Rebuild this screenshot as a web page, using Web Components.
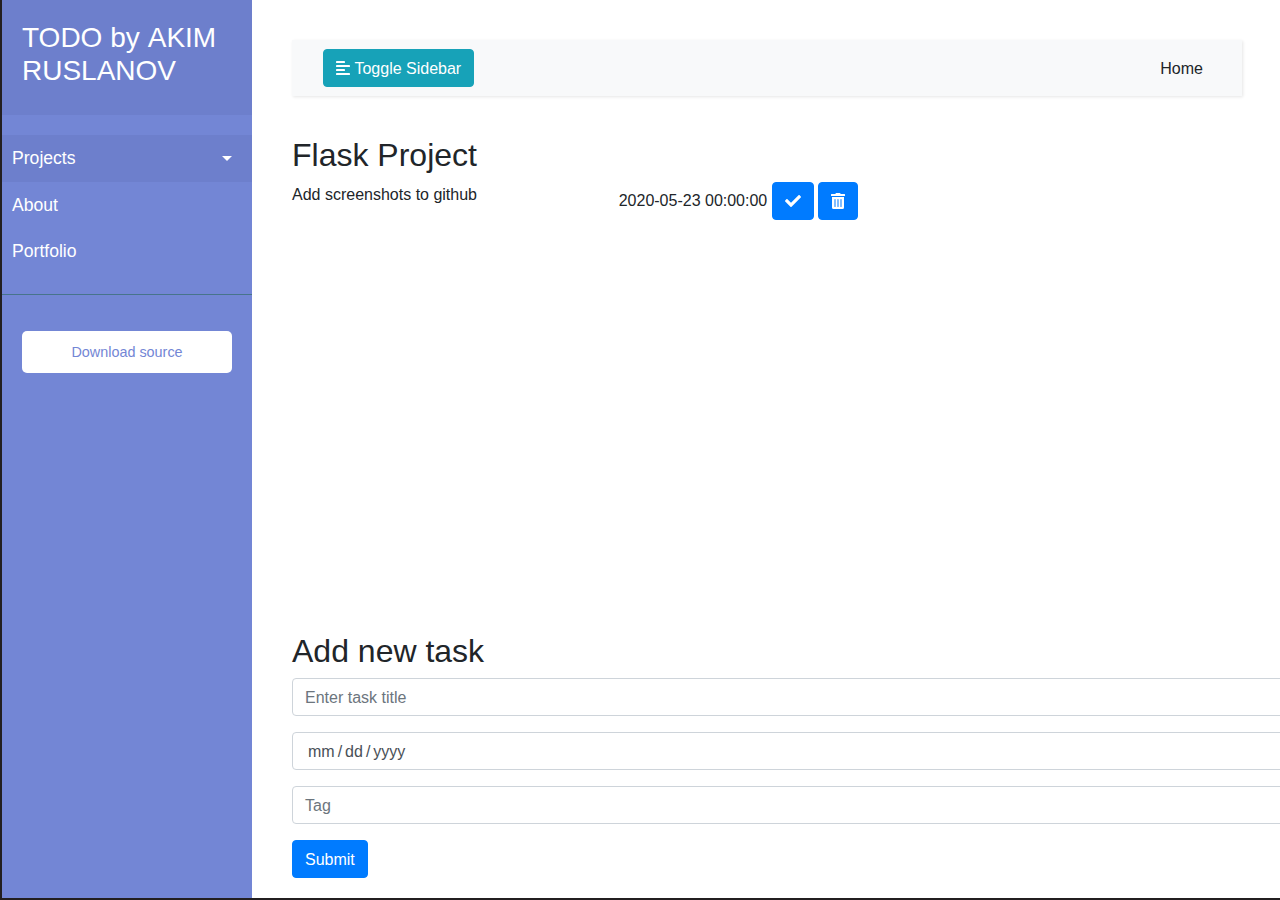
<!DOCTYPE html>
<html lang="en">
<head>
<meta charset="utf-8">
<title>TODO</title>
<style>
html, body { margin: 0; height: 100%; overflow: hidden; }
body { font: 16px/1.5 "Liberation Sans", Arial, sans-serif; color: #212529; background: #fff; }
</style>
</head>
<body>
<todo-app></todo-app>
<script>
function define(name, html) {
  const template = document.createElement('template');
  template.innerHTML = '<style>*{box-sizing:border-box}</style>' + html;
  customElements.define(name, class extends HTMLElement {
    constructor() {
      super();
      this.attachShadow({ mode: 'open' }).append(template.content.cloneNode(true));
    }
  });
}

define('side-link', `
<style>
:host { display: block; background: var(--link-bg, transparent); }
a { display: flex; align-items: center; justify-content: space-between; padding: 10px 20px 10px 10px; font-size: 17.6px; line-height: 26.4px; color: #fff; text-decoration: none; }
:host([active]) { --link-bg: #6d7fcc; }
i { display: none; border: solid transparent; border-width: 5.28px 5.28px 0; border-top-color: #fff; }
:host([active]) i { display: block; }
</style>
<a href="#"><slot></slot><i></i></a>`);

define('side-bar', `
<style>
:host { display: block; flex: 0 0 250px; background: #7386d5; color: #fff; }
header { padding: 21px 20px 20px; height: 115.2px; background: #6d7fcc; }
h3 { margin: 0; font-size: 28px; font-weight: 400; line-height: 33px; }
h3 span { margin-left: .2px; }
nav { padding: 20px 0; border-bottom: 1px solid #47748b; margin-bottom: 16px; }
.cta { padding: 20px; }
.cta a { display: block; padding: 11px 10px 9px; border-radius: 5px; background: #fff; color: #7386d5; font-size: 14.4px; line-height: 21.6px; text-align: center; text-decoration: none; }
</style>
<header><h3>TODO by <span>AKIM</span> RUSLANOV</h3></header>
<nav>
  <side-link active>Projects</side-link>
  <side-link>About</side-link>
  <side-link>Portfolio</side-link>
</nav>
<div class="cta"><a href="#">Download source</a></div>`);

define('ui-button', `
<style>
:host { display: inline-block; vertical-align: middle; }
button { display: block; height: 38px; padding: 7px 12px 5px; border: 1px solid var(--tone, #007bff); border-radius: 4px; background: var(--tone, #007bff); color: #fff; font: inherit; line-height: 24px; white-space: nowrap; }
:host([info]) { --tone: #17a2b8; }
::slotted(svg) { height: 16px; vertical-align: -2px; fill: currentColor; }
</style>
<button type="button"><slot></slot></button>`);

define('top-bar', `
<style>
:host { display: flex; align-items: flex-start; justify-content: space-between; width: 950px; height: 56px; padding: 9px 39px 0 31px; margin: 0 0 40px; background: #f8f9fa; box-shadow: 1px 1px 3px rgba(0,0,0,.1); }
a { margin-top: 8px; color: #212529; text-decoration: none; }
svg { margin-right: .3px; }
</style>
<ui-button info><svg viewBox="0 0 14 16" width="14" height="16"><rect y="1" width="9" height="2" rx=".4"/><rect y="5" width="14" height="2" rx=".4"/><rect y="9" width="9" height="2" rx=".4"/><rect y="13" width="14" height="2" rx=".4"/></svg> Toggle Sidebar</ui-button>
<a href="#">Home</a>`);

define('task-row', `
<style>
:host { display: grid; grid-template-columns: 326.7px auto; justify-content: start; align-items: start; }
.title { padding-top: 1px; }
.when { display: flex; align-items: center; gap: 4.4px; }
</style>
<div class="title"><slot></slot></div>
<div class="when"><slot name="date"></slot>
<ui-button><svg viewBox="0 0 512 512" width="16" height="16"><path d="M173.898 439.404l-166.4-166.4c-9.997-9.997-9.997-26.206 0-36.204l36.203-36.204c9.997-9.998 26.207-9.998 36.204 0L192 312.69 432.095 72.596c9.997-9.997 26.207-9.997 36.204 0l36.203 36.204c9.997 9.997 9.997 26.206 0 36.204l-294.4 294.401c-9.998 9.997-26.207 9.997-36.204-.001z"/></svg></ui-button>
<ui-button><svg viewBox="0 0 448 512" width="14" height="16"><path d="M32 464a48 48 0 0 0 48 48h288a48 48 0 0 0 48-48V128H32zm272-256a16 16 0 0 1 32 0v224a16 16 0 0 1-32 0zm-96 0a16 16 0 0 1 32 0v224a16 16 0 0 1-32 0zm-96 0a16 16 0 0 1 32 0v224a16 16 0 0 1-32 0zM432 32H312l-9.4-18.7A24 24 0 0 0 281.1 0H166.800a23.720 23.720 0 0 0-21.400 13.300L136 32H16A16 16 0 0 0 0 48v32a16 16 0 0 0 16 16h416a16 16 0 0 0 16-16V48a16 16 0 0 0-16-16z"/></svg></ui-button>
</div>`);

define('form-field', `
<style>
:host { display: block; width: 1100px; height: 38px; margin-bottom: 16px; padding: 7px 12px 5px; border: 1px solid #ced4da; border-radius: 4px; background: #fff; color: #6c757d; }
:host([date]) { display: flex; gap: 3px; padding-left: 15px; color: #495057; }
</style>
<slot></slot>`);

define('todo-app', `
<style>
:host { display: flex; height: 900px; border: solid #231f20; border-width: 0 0 2px 2px; box-sizing: border-box; overflow: hidden; }
main { flex: 1; min-width: 0; display: flex; flex-direction: column; padding: 40px 0 20px 40px; overflow: hidden; }
h2 { margin: 0 0 8px; font-size: 32px; font-weight: 400; line-height: 38.4px; }
form { margin-top: auto; }
</style>
<side-bar></side-bar>
<main>
  <top-bar></top-bar>
  <h2>Flask Project</h2>
  <task-row>Add screenshots to github<span slot="date">2020-05-23 00:00:00</span></task-row>
  <form>
    <h2>Add new task</h2>
    <form-field>Enter task title</form-field>
    <form-field date><span>mm</span><span>/</span><span>dd</span><span>/</span><span>yyyy</span></form-field>
    <form-field>Tag</form-field>
    <ui-button>Submit</ui-button>
  </form>
</main>`);
</script>
</body>
</html>
